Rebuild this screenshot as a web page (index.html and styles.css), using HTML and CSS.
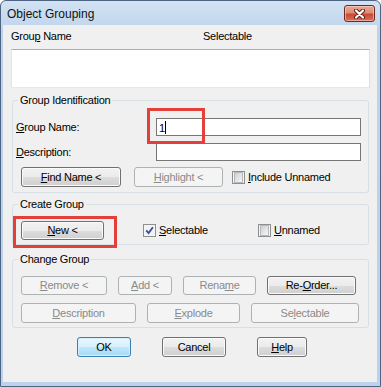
FILE: index.html
```html
<!DOCTYPE html>
<html>
<head>
<meta charset="utf-8">
<title>Object Grouping</title>
<link rel="stylesheet" href="styles.css">
</head>
<body>
<div class="window">
  <div class="titlebar">
    <span class="title">Object Grouping</span>
    <span class="close" aria-label="Close">
      <svg width="13" height="10" viewBox="0 0 13 10">
        <path d="M3 1.5 L10 8.5 M10 1.5 L3 8.5" stroke="#5a1e16" stroke-width="4" stroke-linecap="round" fill="none"/>
        <path d="M3 1.5 L10 8.5 M10 1.5 L3 8.5" stroke="#ffffff" stroke-width="2.2" stroke-linecap="round" fill="none"/>
      </svg>
    </span>
  </div>
  <div class="client">
    <div class="list-head">
      <span>Grou<u>p</u> Name</span>
      <span>Selectable</span>
    </div>
    <div class="listbox"></div>

    <fieldset class="group gid">
      <legend>Group Identification</legend>
      <div class="field-row">
        <label><u>G</u>roup Name:</label>
        <span class="textbox">1<span class="caret"></span></span>
      </div>
      <div class="field-row row-gap">
        <label><u>D</u>escription:</label>
        <span class="textbox"></span>
      </div>
      <div class="btn-row gid-buttons">
        <button class="btn w-find"><u>F</u>ind Name &lt;</button>
        <button class="btn disabled w-high"><u>H</u>ighlight &lt;</button>
        <span class="check inc">
          <span class="chk"></span><span><u>I</u>nclude Unnamed</span>
        </span>
      </div>
    </fieldset>

    <fieldset class="group cg">
      <legend>Create Group</legend>
      <div class="btn-row">
        <button class="btn w-new"><u>N</u>ew &lt;</button>
        <span class="check sel">
          <span class="chk checked">
            <svg width="9" height="9" viewBox="0 0 9 9"><path d="M1.2 4.4 L3.6 7 L7.9 1.2" stroke="#2b4f9e" stroke-width="1.8" fill="none"/></svg>
          </span><span><u>S</u>electable</span>
        </span>
        <span class="check">
          <span class="chk"></span><span><u>U</u>nnamed</span>
        </span>
      </div>
    </fieldset>

    <fieldset class="group chg">
      <legend>Change Group</legend>
      <div class="btn-row row1">
        <button class="btn disabled w-remove"><u>R</u>emove &lt;</button>
        <button class="btn disabled w-add"><u>A</u>dd &lt;</button>
        <button class="btn disabled w-rename">Rena<u>m</u>e</button>
        <button class="btn w-reorder">Re-<u>O</u>rder...</button>
      </div>
      <div class="btn-row row2">
        <button class="btn disabled w-desc"><u>D</u>escription</button>
        <button class="btn disabled w-explode"><u>E</u>xplode</button>
        <button class="btn disabled w-sel">Se<u>l</u>ectable</button>
      </div>
    </fieldset>

    <div class="dialog-buttons">
      <button class="btn default w-ok">OK</button>
      <button class="btn w-cancel">Cancel</button>
      <button class="btn w-help"><u>H</u>elp</button>
    </div>
  </div>
  <div class="highlight hl-name"></div>
  <div class="highlight hl-new"></div>
</div>
</body>
</html>
```
FILE: styles.css
```css
* { box-sizing: border-box; }
html, body { margin: 0; padding: 0; }
body {
  width: 381px;
  height: 387px;
  overflow: hidden;
  background: #ffffff;
  font-family: "Liberation Sans", Arial, sans-serif;
  font-size: 11px;
  letter-spacing: -0.25px;
  color: #000;
}
u { text-decoration: underline; text-underline-offset: 1px; }

.window {
  position: relative;
  width: 381px;
  height: 387px;
  border: 1px solid #4e6483;
  border-radius: 6px 6px 0 0;
  background: linear-gradient(#d2e2f3, #bfd4eb 30px, #bcd2ea);
  padding: 0 3px 4px 2px;
  display: flex;
  flex-direction: column;
}

.titlebar {
  height: 24px;
  flex: none;
  display: flex;
  align-items: flex-start;
  justify-content: space-between;
  padding: 0 2px 0 4px;
}
.title {
  font-size: 12px;
  letter-spacing: 0;
  line-height: 14px;
  padding-top: 6px;
  color: #111;
}
.close {
  margin-top: 4px;
  width: 31px;
  height: 17px;
  border: 1px solid #6b2a20;
  border-radius: 3px;
  background: linear-gradient(#e9aa9a, #de8b77 45%, #c94a33 55%, #d8705a);
  box-shadow: inset 0 0 0 1px rgba(255,220,210,0.55);
  display: flex;
  align-items: center;
  justify-content: center;
}
.close svg { display: block; }

.client {
  flex: 1;
  background: #f0f0f0;
  padding-top: 5px;
}

.list-head {
  display: grid;
  grid-template-columns: 192px auto;
  padding-left: 8px;
  line-height: 13px;
}
.listbox {
  margin: 6px 0 0 8px;
  width: 359px;
  height: 39px;
  background: #fff;
  border: 1px solid;
  border-color: #a9aeb6 #dbdfe6 #e3e9ef #e2e3ea;
}

.group {
  margin: 0 0 0 9px;
  width: 357px;
  min-inline-size: 0;
  border: 1px solid #d5dfe5;
  border-radius: 3px;
  padding: 10px 0 4px 3px;
}
.group legend {
  padding: 0 2px;
  margin-left: 2px;
  line-height: 13px;
  color: #000;
}
.gid { margin-top: 6px; padding-top: 11px; padding-bottom: 5px; }
.cg { margin-top: 5px; }
.chg { margin-top: 8px; }

.field-row {
  display: grid;
  grid-template-columns: 140px 205px;
  align-items: center;
  height: 18px;
  line-height: 13px;
}
.row-gap { margin-top: 7px; }
.textbox {
  height: 18px;
  background: #fff;
  border: 1px solid #767676;
  padding: 1px 0 0 2px;
  line-height: 14px;
  display: flex;
  align-items: center;
}
.caret {
  display: inline-block;
  width: 1px;
  height: 13px;
  background: #000;
  margin-left: 0;
}

.btn-row {
  display: flex;
  align-items: center;
  padding-left: 5px;
  height: 20px;
}
.gid-buttons { margin-top: 6px; }
.cg .btn-row { height: 19px; }
.chg .row1 { height: 19px; gap: 11px; }
.chg .row2 { margin-top: 8px; gap: 11px; }

.btn {
  font-family: inherit;
  font-size: 11px;
  letter-spacing: -0.25px;
  color: #000;
  height: 100%;
  padding: 0;
  border: 1px solid #707070;
  border-radius: 3px;
  background: linear-gradient(#f2f2f2, #ebebeb 50%, #dddddd 51%, #cfcfcf);
  box-shadow: inset 0 0 0 1px #fbfbfb;
  display: inline-flex;
  align-items: center;
  justify-content: center;
  line-height: 13px;
}
.btn.disabled {
  color: #8a8a8a;
  border-color: #adb2b5;
  background: #f4f4f4;
  box-shadow: none;
}
.btn.default {
  border-color: #3c7fb1;
  background: linear-gradient(#eaf6fd, #d9f0fc 50%, #bee6fd 51%, #a7d9f5);
  box-shadow: inset 0 0 0 1px #d4f0fd;
}

.w-find { width: 100px; }
.w-high { width: 89px; margin-left: 13px; }
.inc { margin-left: 9px; }
.w-new { width: 83px; }
.sel { margin-left: 39px; width: 115px; }
.w-remove { width: 86px; }
.w-add { width: 54px; }
.w-rename { width: 73px; }
.w-reorder { width: 89px; }
.w-desc { width: 115px; }
.w-explode { width: 93px; }
.w-sel { width: 108px; }
.w-ok { width: 54px; }
.w-cancel { width: 64px; }
.w-help { width: 50px; }

.check {
  display: inline-flex;
  align-items: center;
  gap: 3px;
  line-height: 13px;
}
.chk {
  width: 13px;
  height: 13px;
  flex: none;
  border: 1px solid #8e8f8f;
  background: #f6f6f6;
  padding: 1px;
  display: flex;
  align-items: center;
  justify-content: center;
}
.chk::before {
  content: "";
  display: block;
  width: 9px;
  height: 9px;
  border: 1px solid #b3b8bd;
  background: linear-gradient(135deg, #cdd0d5, #eeeff0 80%, #f6f6f6);
}
.chk.checked { background: #f4f4f4; }
.chk.checked::before { display: none; }
.chk.checked svg { display: block; }

.dialog-buttons {
  display: flex;
  gap: 31px;
  padding-left: 74px;
  margin-top: 9px;
  height: 20px;
}

.highlight {
  position: absolute;
  border: 3px solid #e3403b;
  pointer-events: none;
}
.hl-name { left: 146px; top: 107px; width: 58px; height: 36px; }
.hl-new { left: 12px; top: 215px; width: 104px; height: 32px; }
```
